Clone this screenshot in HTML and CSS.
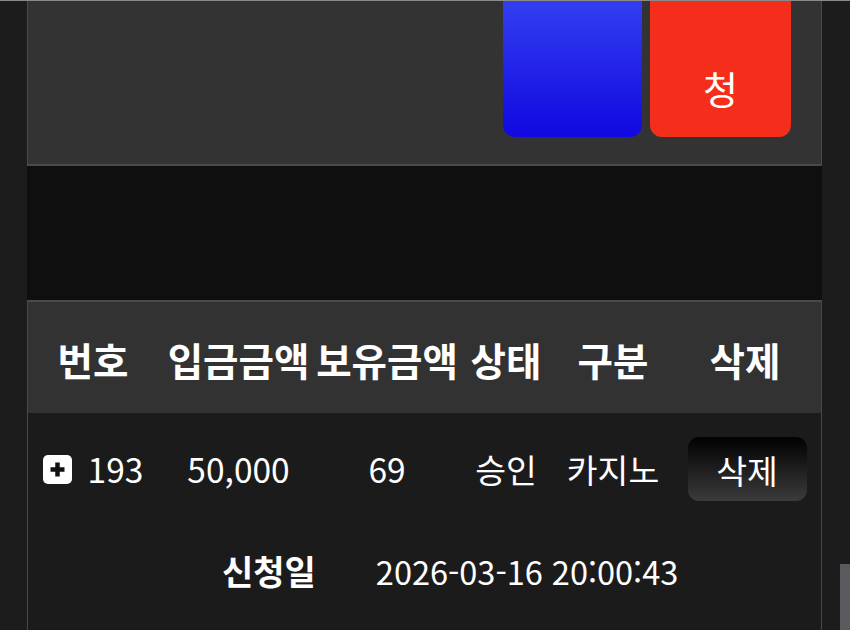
FILE: index.html
```html
<!DOCTYPE html>
<html lang="ko">
<head>
    <meta charset="UTF-8">
    <meta name="viewport" content="width=device-width, initial-scale=1.0">
    <title>입금 내역</title>
    <link rel="stylesheet" href="styles.css">
</head>
<body>
    <div id="wrap">
        <div class="apply-box">
            <button class="btn-blue"></button>
            <button class="btn-red">청</button>
        </div>

        <div class="spacer"></div>

        <div class="list">
            <div class="list-head">
                <div>번호</div>
                <div>입금금액</div>
                <div>보유금액</div>
                <div>상태</div>
                <div>구분</div>
                <div>삭제</div>
            </div>

            <div class="list-row">
                <div class="no">
                    <svg class="plus" width="29" height="29" viewBox="0 0 29 29">
                        <rect x="0" y="0" width="29" height="29" rx="5" fill="#fff"/>
                        <path d="M14.5 7.5v14M7.5 14.5h14" stroke="#111" stroke-width="4.5"/>
                    </svg>
                    <span>193</span>
                </div>
                <div>50,000</div>
                <div>69</div>
                <div>승인</div>
                <div>카지노</div>
                <div><button class="btn-del">삭제</button></div>
            </div>

            <div class="row-detail">
                <span class="label">신청일</span>
                <span class="date">2026-03-16 20:00:43</span>
            </div>
        </div>
    </div>

    <div class="scroll-thumb"></div>
</body>
</html>
```

FILE: styles.css
```css
* {
    margin: 0;
    padding: 0;
    box-sizing: border-box;
}

body {
    background-color: #1c1c1d;
    font-family: "Noto Sans CJK KR", "Noto Sans", sans-serif;
    color: #fff;
    overflow: hidden;
    border-top: 1px solid #8a8a8a;
}

#wrap {
    width: 795px;
    margin-left: 27px;
}

.apply-box {
    height: 165px;
    display: flex;
    justify-content: flex-end;
    align-items: flex-end;
    gap: 8px;
    padding: 0 30px 27px 0;
    background-color: #333333;
    border: 1px solid #4a4a4c;
    border-top: none;
    border-bottom: 2px solid #4a4a4c;
    overflow: hidden;
}

.apply-box button {
    height: 170px;
    flex-shrink: 0;
    border: none;
    border-radius: 12px;
    color: #fff;
    font-family: inherit;
    font-size: 38px;
    line-height: 52px;
}

.btn-blue {
    width: 139px;
    background: linear-gradient(#3b4cf4, #1108e0);
}

.btn-red {
    width: 141px;
    background-color: #f52e1c;
    display: flex;
    justify-content: center;
    align-items: flex-end;
    padding-bottom: 23px;
}

.spacer {
    height: 134px;
    background-color: #0f0f10;
}

.list {
    border-top: 2px solid #4a4a4c;
    border-left: 1px solid #48484a;
    border-right: 1px solid #48484a;
    background-color: #1c1b1c;
    height: 340px;
}

.list-head,
.list-row {
    display: grid;
    grid-template-columns: 130px 161px 136px 102px 112px 152px;
    align-items: center;
}

/* cells center their text even when it is wider than the track */
.list-head > div,
.list-row > div {
    display: flex;
    justify-content: center;
    align-items: center;
    white-space: nowrap;
}

.list-head {
    height: 111px;
    background-color: #333233;
    font-size: 38.5px;
    font-weight: bold;
    padding-top: 2px;
}

.list-row {
    padding-top: 24px;
    font-size: 33.5px;
    line-height: 44px;
}

.list-row .no {
    gap: 16px;
}

.plus {
    display: block;
    flex-shrink: 0;
}

.btn-del {
    width: 119px;
    height: 64px;
    margin-left: 4px;
    border: none;
    border-radius: 11px;
    background: linear-gradient(#010101, #3c3b3c);
    color: #fff;
    font-family: inherit;
    font-size: 33.5px;
}

.row-detail {
    display: flex;
    align-items: center;
    margin-top: 48px;
    padding-left: 194px;
    gap: 60px;
    font-size: 34px;
    line-height: 44px;
}

.row-detail .label {
    font-weight: bold;
}

.row-detail .date {
    font-size: 32.5px;
}

.scroll-thumb {
    position: fixed;
    right: 0;
    top: 564px;
    width: 10px;
    height: 66px;
    background-color: #5a595e;
}
```
